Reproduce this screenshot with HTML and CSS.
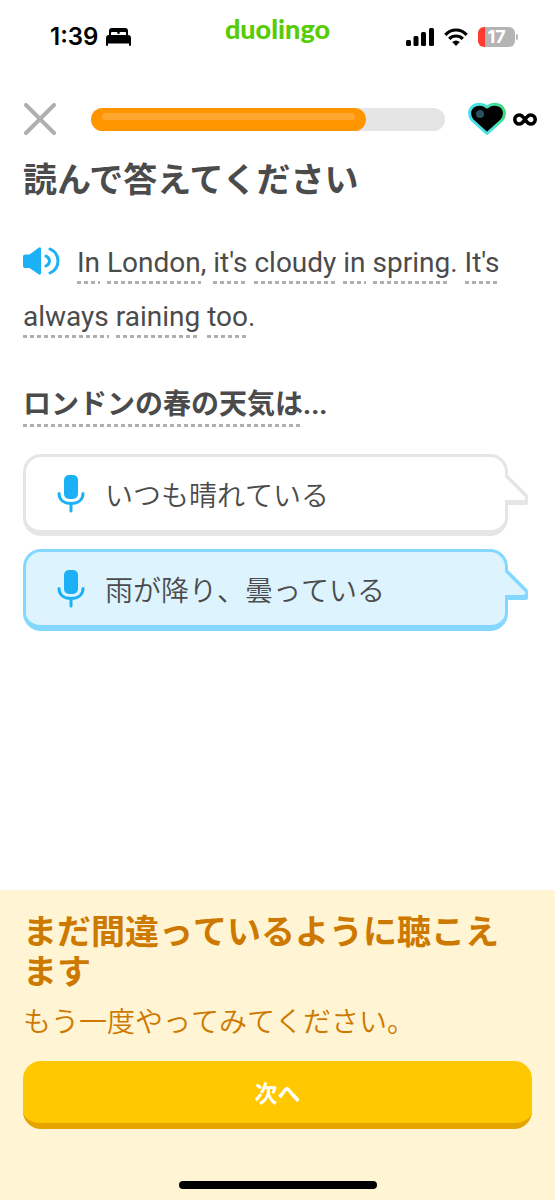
FILE: index.html
```html
<!DOCTYPE html>
<html lang="ja">
<head>
<meta charset="utf-8">
<meta name="viewport" content="width=device-width, initial-scale=1">
<title>duolingo</title>
<link rel="stylesheet" href="styles.css">
</head>
<body>
<div class="status">
  <div class="status-left">
    <span class="time">1:39</span>
    <svg width="25" height="18" viewBox="0 0 25 18" aria-hidden="true">
      <path d="M3 7V3Q3 0 6 0H19Q22 0 22 3V7H20V5Q20 4 19 4H14.500Q13.500 4 13.500 5V6H11.500V5Q11.500 4 10.500 4H6Q5 4 5 5V7Z"/>
      <path d="M3 7H22Q25 7 25 10V17Q25 18 24 18T23 17V15.500H2V17Q2 18 1 18T0 17V10Q0 7 3 7Z"/>
    </svg>
  </div>
  <div class="logo">duolingo</div>
  <div class="status-right">
    <svg width="28" height="18" viewBox="0 0 28 18" aria-hidden="true">
      <rect x="0" y="12" width="5" height="6" rx="1.500"/><rect x="7.500" y="8" width="5" height="10" rx="1.500"/><rect x="15" y="4" width="5" height="14" rx="1.500"/><rect x="23" y="0" width="5" height="18" rx="1.500"/>
    </svg>
    <svg width="24" height="18" viewBox="0 0 24 18" aria-hidden="true">
      <g fill="none" stroke="#000" stroke-width="3.200"><path d="M1.300 6.800Q6 2 12 2T22.700 6.800"/><path d="M5.200 10.800Q8 8 12 8T18.800 10.800"/></g>
      <path d="M8.200 14Q12 11 15.800 14L12 18Z"/>
    </svg>
    <div class="battery"><span>17</span></div>
  </div>
</div>

<header class="top">
  <button class="close" aria-label="閉じる">
    <svg width="32" height="32" viewBox="0 0 32 32"><path d="M2 2L30 30M30 2L2 30" stroke="#afafaf" stroke-width="4" stroke-linecap="round"/></svg>
  </button>
  <div class="progress" role="progressbar" aria-label="進捗" aria-valuenow="78" aria-valuemin="0" aria-valuemax="100">
    <div class="progress-fill" style="width:77.6%"></div>
  </div>
  <div class="hearts">
    <svg width="38" height="34" viewBox="0 0 38 34" aria-hidden="true">
      <defs><linearGradient id="rim" x1="0" y1="0.600" x2="1" y2="0.300"><stop offset="0" stop-color="#4adcf5"/><stop offset="0.500" stop-color="#46e3d5"/><stop offset="1" stop-color="#3ddb7c"/></linearGradient></defs>
      <path d="M19 31.500L4.500 18.500Q0.500 14 2 8.500C4 2 13 0 19 5C25 0 34 2 36 8.500Q37.500 14 33.500 18.500Z" fill="#000" stroke="url(#rim)" stroke-width="3" stroke-linejoin="round"/>
      <circle cx="12" cy="12" r="4" fill="#285260"/>
    </svg>
    <svg width="24" height="13" viewBox="0 0 24 13" aria-hidden="true">
      <path d="M12 6.500C10 3.500 8.500 2 6.300 2A4.500 4.500 0 0 0 6.300 11C8.500 11 10 9.500 12 6.500C14 3.500 15.500 2 17.700 2A4.500 4.500 0 0 1 17.700 11C15.500 11 14 9.500 12 6.500Z" fill="none" stroke="#000" stroke-width="3.600"/>
    </svg>
  </div>
</header>

<main class="lesson">
  <h1>読んで答えてください</h1>
  <p class="passage" lang="en"><button class="speaker" aria-label="音声を再生"><svg width="38" height="30" viewBox="0 0 38 30"><path d="M2 8.500H6.500L16 1.500Q18 0.500 18 3V27Q18 29.500 16 28.500L6.500 22H2Q0 22 0 20V10.500Q0 8.500 2 8.500Z" fill="#1cb0f6"/><path d="M23 10Q26.500 12 26.500 15T23 20M27 3Q35 6.500 35 15T27 27" fill="none" stroke="#1cb0f6" stroke-width="3" stroke-linecap="round"/></svg></button><span class="hint">In</span> <span class="hint">London</span>, <span class="hint">it's</span> <span class="hint">cloudy</span> <span class="hint">in</span> <span class="hint">spring</span>. <span class="hint">It's</span> <span class="hint">always</span> <span class="hint">raining</span> <span class="hint">too</span>.</p>
  <h2 class="question"><span class="hint">ロンドンの春の天気は</span>...</h2>
  <div class="choices">
    <button class="choice" aria-pressed="false">
      <svg class="mic" width="28" height="38" viewBox="0 0 28 38" aria-hidden="true"><rect x="7" y="0" width="14" height="24" rx="5"/><path d="M2 18.500C2 25 7 28.500 14 28.500S26 25 26 18.500M14 29V36"/></svg>
      <span>いつも晴れている</span>
      <svg class="tail" width="24" height="30" viewBox="0 0 24 30" aria-hidden="true"><path class="edge" d="M3 0L22 19Q23 20 23 22V28Q23 30 21 30H1V25L0 0Z"/><path class="inside" d="M0 2L1 3L20 22Q21 25 18 25H0Z"/></svg>
    </button>
    <button class="choice selected" aria-pressed="true">
      <svg class="mic" width="28" height="38" viewBox="0 0 28 38" aria-hidden="true"><rect x="7" y="0" width="14" height="24" rx="5"/><path d="M2 18.500C2 25 7 28.500 14 28.500S26 25 26 18.500M14 29V36"/></svg>
      <span>雨が降り、曇っている</span>
      <svg class="tail" width="24" height="30" viewBox="0 0 24 30" aria-hidden="true"><path class="edge" d="M3 0L22 19Q23 20 23 22V28Q23 30 21 30H1V25L0 0Z"/><path class="inside" d="M0 2L1 3L20 22Q21 25 18 25H0Z"/></svg>
    </button>
  </div>
</main>

<footer class="feedback">
  <h2>まだ間違っているように聴こえます</h2>
  <p>もう一度やってみてください。</p>
  <button class="next">次へ</button>
  <div class="home-bar"></div>
</footer>
</body>
</html>
```
FILE: styles.css
```css
* { box-sizing: border-box; }
body {
  margin: 0;
  min-height: 100vh;
  display: flex;
  flex-direction: column;
  background: #fff;
  color: #4b4b4b;
  font-family: Roboto, "Noto Sans CJK JP", sans-serif;
}
h1, h2, p { margin: 0; }
button {
  padding: 0;
  border: 0;
  background: none;
  color: inherit;
  font: inherit;
}
svg { display: block; flex: none; }

.status {
  display: grid;
  grid-template-columns: 1fr auto 1fr;
  align-items: center;
  height: 74px;
  padding: 0 40px;
  color: #000;
}
.status-left, .status-right { display: flex; align-items: center; }
.status-left { gap: 8px; padding-left: 10px; }
.status-right { gap: 10px; justify-content: flex-end; }
.time { font: 600 24px/28px Inter, sans-serif; }
.logo {
  padding-bottom: 16px;
  color: #58cc02;
  font: 900 27px/30px Lato, sans-serif;
}
.battery {
  position: relative;
  width: 37px;
  height: 20px;
  border-radius: 6px;
  background: linear-gradient(to right, #ff3b30 7px, #b4b4b4 7px);
  color: #fff;
  font: 700 18px/20px Inter, sans-serif;
  text-align: center;
}
.battery::after {
  content: "";
  position: absolute;
  left: 38px;
  top: 7px;
  width: 2px;
  height: 6px;
  border-radius: 0 2px 2px 0;
  background: #b4b4b4;
}

.top {
  display: flex;
  align-items: center;
  height: 90px;
  padding: 0 18px 0 24px;
  margin-bottom: -8px;
}
.progress {
  flex: 1;
  height: 23px;
  margin: 0 23px 0 35px;
  border-radius: 12px;
  background: #e5e5e5;
}
.progress-fill {
  height: 23px;
  padding: 5px 11px;
  border-radius: 12px;
  background: #ff9600;
}
.progress-fill::before {
  content: "";
  display: block;
  height: 7px;
  border-radius: 4px;
  background: #ffa62e;
}
.hearts { display: flex; align-items: center; gap: 7px; }

.lesson { flex: 1; padding: 0 24px 0 23px; }
.lesson h1 {
  font: 700 34px/44px "Noto Sans CJK JP", sans-serif;
}
.passage {
  margin-top: 36px;
  font-size: 28px;
  line-height: 54px;
}
.speaker {
  margin-right: 16px;
  vertical-align: -4px;
}
.hint {
  padding-bottom: 5px;
  background: repeating-linear-gradient(to right, #afafaf 0 4px, transparent 4px 7px) left bottom / 100% 3px no-repeat;
}
.question {
  margin-top: 37px;
  font: 700 28px/48px Roboto, "Noto Sans CJK JP", sans-serif;
  font-kerning: none;
}
.question .hint { padding-bottom: 6px; }
.choices {
  display: grid;
  gap: 13px;
  margin: 25px 23px 0 0;
}
.choice {
  position: relative;
  display: flex;
  align-items: center;
  gap: 20px;
  height: 82px;
  padding: 0 31px;
  border: 3px solid #e5e5e5;
  border-bottom-width: 6px;
  border-radius: 18px;
  background: #fff;
  font: 350 28px/40px "Noto Sans CJK JP", sans-serif;
  font-kerning: none;
  text-align: left;
}
.choice.selected { border-color: #84d8ff; background: #ddf4ff; }
.mic rect { fill: #1cb0f6; }
.mic path {
  fill: none;
  stroke: #1cb0f6;
  stroke-width: 3;
  stroke-linecap: round;
}
.tail { position: absolute; right: -24px; top: 18px; }
.edge { fill: #e5e5e5; }
.inside { fill: #fff; }
.selected .edge { fill: #84d8ff; }
.selected .inside { fill: #ddf4ff; }

.feedback {
  display: flex;
  flex-direction: column;
  padding: 20px 23px 11px;
  background: #fff4d3;
  color: #cd7900;
}
.feedback h2 {
  padding-right: 24px;
  font: 700 34px/40px "Noto Sans CJK JP", sans-serif;
  font-kerning: none;
}
.feedback p {
  margin-top: 10px;
  font: 350 28px/40px "Noto Sans CJK JP", sans-serif;
  font-kerning: none;
}
.next {
  height: 68px;
  margin-top: 21px;
  border-bottom: 6px solid #e5a400;
  border-radius: 18px;
  background: #ffc800;
  color: #fff;
  font: 700 23px/32px "Noto Sans CJK JP", sans-serif;
}
.home-bar {
  align-self: center;
  width: 198px;
  height: 8px;
  margin-top: 52px;
  border-radius: 4px;
  background: #000;
}
```
